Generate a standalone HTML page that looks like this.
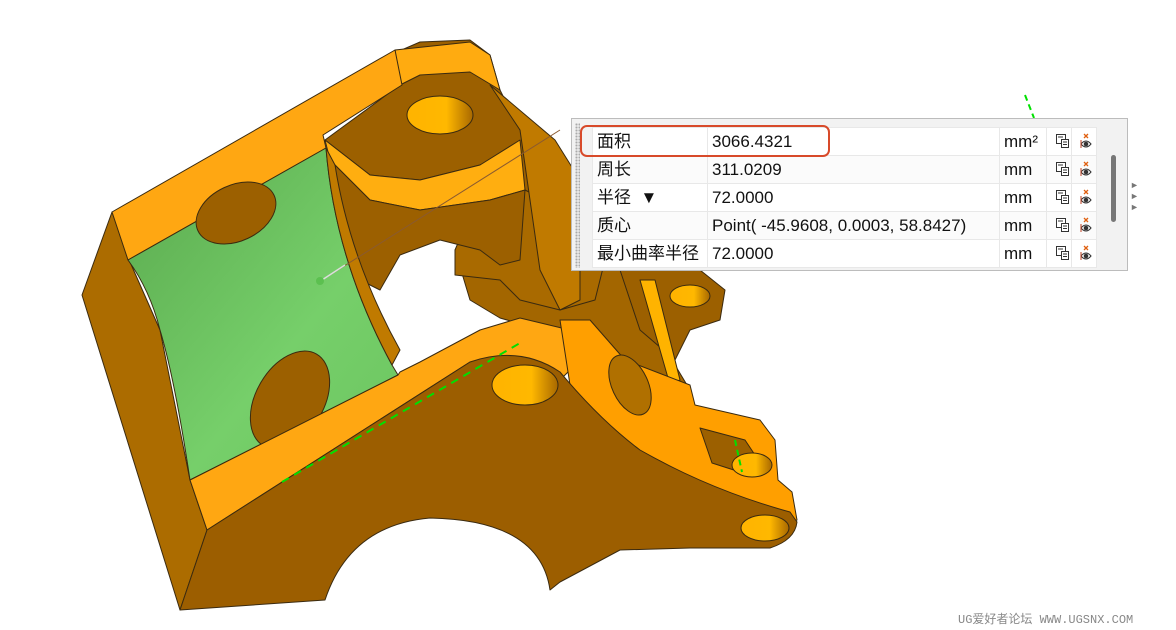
<!DOCTYPE html>
<html><head><meta charset="utf-8"><style>
body{margin:0;width:1176px;height:630px;background:#fff;overflow:hidden;position:relative;font-family:"Liberation Sans","Noto Sans CJK SC",sans-serif}
svg{position:absolute;left:0;top:0}
.panel{position:absolute;left:571px;top:118px;width:557px;height:153px;background:#f2f2f2;border:1px solid #bcbcbc;box-sizing:border-box}
.grip{position:absolute;left:3px;top:4px;width:5px;height:145px;background-image:radial-gradient(#aaa 1px,transparent 1.2px);background-size:3px 3px}
table{position:absolute;left:20px;top:8px;border-collapse:collapse;background:#fff}
td{height:27px;border:1px solid #e8e8e8;font-size:17px;color:#111;padding:0 0 0 4px;white-space:nowrap;line-height:27px}
tr:nth-child(even) td{background:#fbfbfb}
.c1{width:110px}.c2{width:287px}.c3{width:42px}.c4{width:20px;padding:0 2px}.c5{width:20px;padding:0 2px}
td svg{position:static;display:block}
.red{position:absolute;left:580px;top:125px;width:250px;height:32px;border:2px solid #d84a2a;border-radius:7px;box-sizing:border-box}
.scroll{position:absolute;left:1111px;top:155px;width:5px;height:67px;background:#777;border-radius:3px}
.arr{position:absolute;left:1130px;font-size:9px;color:#777;line-height:9px}
.wm{position:absolute;left:958px;top:610px;font-family:"Liberation Mono","Noto Sans CJK SC",monospace;font-size:12px;color:#888}
</style></head><body>
<svg width="1176" height="630" viewBox="0 0 1176 630">
<defs>
<linearGradient id="g" x1="0" y1="0" x2="1" y2="1"><stop offset="0" stop-color="#5aa94e"/><stop offset="0.6" stop-color="#76cf6a"/><stop offset="1" stop-color="#6cc560"/></linearGradient>
<linearGradient id="h" x1="0" y1="0" x2="1" y2="0"><stop offset="0" stop-color="#ffb300"/><stop offset="0.6" stop-color="#ffb800"/><stop offset="1" stop-color="#a86800"/></linearGradient>
</defs>
<g stroke="#3a2a10" stroke-width="1" stroke-linejoin="round">
<path d="M455,250 L600,190 L655,270 L630,290 L690,390 L600,385 L560,335 L500,318 L470,300Z" fill="#a36600"/>
<path d="M455,250 L470,215 L560,170 L600,200 L605,260 L595,300 L560,310 L520,300 L500,280 L455,275Z" fill="#a96a00"/>
<path d="M620,270 L700,270 L725,290 L720,320 L690,330 L675,360 L640,330Z" fill="#9c6000"/>
<ellipse cx="690" cy="296" rx="20" ry="11" fill="url(#h)"/>
<path d="M640,280 L655,280 L680,380 L670,385Z" fill="#ffb300"/>
<path d="M390,55 L420,42 L470,40 L490,55 L500,90 L520,130 L560,175 L545,200 L525,190 L515,150 L480,165 L420,180 L370,175 L325,140 L400,85Z" fill="#9c6000"/>
<path d="M395,50 L470,42 L490,55 L500,90 L470,72 L420,75 L400,85Z" fill="#ffab10"/>
<ellipse cx="440" cy="115" rx="33" ry="19" fill="url(#h)"/>
<path d="M325,140 L370,175 L420,180 L480,165 L520,140 L525,190 L490,200 L420,210 L370,200 L330,160Z" fill="#ffae10"/>
<path d="M335,165 L370,200 L420,210 L490,200 L525,190 L520,260 L500,265 L480,250 L440,240 L400,255 L380,290 L360,280 L340,240Z" fill="#9c6000"/>
<path d="M490,85 L555,140 L580,180 L580,300 L560,310 L540,270 L530,200 L520,130Z" fill="#c07a00"/>
<path d="M82,295 L112,212 L130,262 L160,330 L190,480 L207,530 L180,610Z" fill="#ac6c00"/>
<path d="M112,212 L395,50 L402,85 L323,135 L326,148 L128,260Z" fill="#ffa712"/>
<path d="M128,260 L326,148 Q335,260 392,365 L398,375 L190,480 Q175,380 160,330 Q150,290 128,260Z" fill="url(#g)"/>
<ellipse cx="236" cy="213" rx="42" ry="28" transform="rotate(-25 236 213)" fill="#9c6000"/>
<ellipse cx="290" cy="400" rx="34" ry="53" transform="rotate(30 290 400)" fill="#9c6000"/>
<path d="M326,148 Q335,260 392,365 L400,350 Q350,260 335,165Z" fill="#c07a00"/>
<path d="M190,480 L398,375 L400,372 L420,362 L480,330 L520,318 L570,330 L580,360 L560,380 L500,360 L470,362 L207,530Z" fill="#ffa712"/>
<path d="M560,320 L590,320 L625,360 L690,385 L695,405 L760,420 L775,440 L778,480 L792,492 L797,520 L780,528 L700,482 L620,440 L570,385 Z" fill="#ff9f00"/>
<ellipse cx="630" cy="385" rx="18" ry="32" transform="rotate(-25 630 385)" fill="#b07000"/>
<path d="M700,428 L745,440 L765,470 L740,472 L712,463Z" fill="#9c6000"/>
<ellipse cx="752" cy="465" rx="20" ry="12" fill="url(#h)"/>
<path d="M207,530 L470,362 Q520,345 560,372 Q600,420 640,450 Q710,490 790,512 L797,522 Q795,540 770,548 L690,548 L620,550 L560,582 L550,590 Q540,520 430,518 Q350,525 325,600 L180,610Z" fill="#9c5e00"/>
<ellipse cx="525" cy="385" rx="33" ry="20" fill="url(#h)"/>
<ellipse cx="765" cy="528" rx="24" ry="13" fill="url(#h)"/>
</g>
<line x1="282" y1="482" x2="520" y2="343" stroke="#00e000" stroke-width="2" stroke-dasharray="8,6"/>
<line x1="1025" y1="95" x2="1034" y2="118" stroke="#00e000" stroke-width="2" stroke-dasharray="6,4"/>
<line x1="735" y1="440" x2="742" y2="472" stroke="#00e000" stroke-width="2" stroke-dasharray="6,4"/>
<line x1="322" y1="280" x2="560" y2="130" stroke="#8a5a30" stroke-width="1"/>
<line x1="322" y1="280" x2="345" y2="265" stroke="#ddd" stroke-width="1.5"/>
<circle cx="320" cy="281" r="4" fill="#5cc050"/>
</svg>
<div class="panel"><div class="grip"></div>
<table>
<tr><td class="c1">面积</td><td class="c2">3066.4321</td><td class="c3">mm²</td><td class="c4">P</td><td class="c5">E</td></tr>
<tr><td class="c1">周长</td><td class="c2">311.0209</td><td class="c3">mm</td><td class="c4">P</td><td class="c5">E</td></tr>
<tr><td class="c1">半径 &nbsp;▼</td><td class="c2">72.0000</td><td class="c3">mm</td><td class="c4">P</td><td class="c5">E</td></tr>
<tr><td class="c1">质心</td><td class="c2">Point( -45.9608, 0.0003, 58.8427)</td><td class="c3">mm</td><td class="c4">P</td><td class="c5">E</td></tr>
<tr><td class="c1">最小曲率半径</td><td class="c2">72.0000</td><td class="c3">mm</td><td class="c4">P</td><td class="c5">E</td></tr>
</table></div>
<svg width="1176" height="630" viewBox="0 0 1176 630" style="pointer-events:none">
<defs>
<g id="pi" fill="none" stroke="#333" stroke-width="1"><rect x="0.5" y="0.5" width="9" height="9" fill="#fff"/><rect x="5.5" y="5.5" width="7" height="8" fill="#fff"/><line x1="2" y1="3" x2="7" y2="3"/><line x1="7" y1="8" x2="11" y2="8"/><line x1="7" y1="10.5" x2="11" y2="10.5"/></g>
<g id="ei"><path d="M3,0 L7,4 M7,0 L3,4" stroke="#e06010" stroke-width="1.3"/><path d="M0,10 Q5,4 10,10 Q5,16 0,10Z" fill="#fff" stroke="#333"/><circle cx="5" cy="10" r="2.3" fill="#333"/><line x1="0" y1="6" x2="0" y2="14" stroke="#c04020"/></g>
</defs>
<use href="#pi" x="1056" y="134"/><use href="#ei" x="1081" y="134"/>
<use href="#pi" x="1056" y="162"/><use href="#ei" x="1081" y="162"/>
<use href="#pi" x="1056" y="190"/><use href="#ei" x="1081" y="190"/>
<use href="#pi" x="1056" y="218"/><use href="#ei" x="1081" y="218"/>
<use href="#pi" x="1056" y="246"/><use href="#ei" x="1081" y="246"/>
</svg>
<style>.c4,.c5{color:transparent}</style>
<div class="red"></div>
<div class="scroll"></div>
<div class="arr" style="top:181px">►</div><div class="arr" style="top:192px">►</div><div class="arr" style="top:203px">►</div>
<div class="wm">UG爱好者论坛 WWW.UGSNX.COM</div>
</body></html>
